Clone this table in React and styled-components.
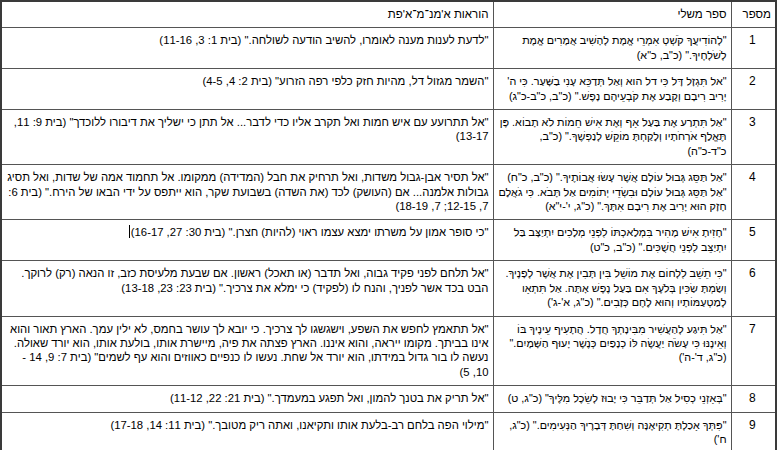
import React from 'react'
import styled, { createGlobalStyle } from 'styled-components'

const GlobalStyle = createGlobalStyle`
    html, body { margin:0; padding:0; background:#fff; }
    body { font-family:"Liberation Sans", Arial, sans-serif; color:#000; }
`

const TableBlock = styled.div`
    direction:rtl;
    width:777px;
    .bbsTbl { width:100%; border-collapse:collapse; border:2px solid #3a3a3a; table-layout:fixed;
        font-size:11.3px; line-height:14.4px; }
    .bbsTbl col:nth-child(1) { width:45px; }
    .bbsTbl col:nth-child(2) { width:238px; }
    .bbsTbl col:nth-child(3) { width:auto; }
    .bbsTbl th, .bbsTbl td { border:1px solid #555; padding:5px 4px 6px; text-align:right;
        vertical-align:top; font-weight:normal; }
    .bbsTbl th { font-size:11.5px; }
    .bbsTbl td.num { text-align:center; padding-right:6px; font-size:12px; }
    .bbsTbl td.verse { font-size:10.8px; }
`

const Caret = styled.span`
    display:inline-block; width:0; height:13px; border-left:1px solid #000;
    vertical-align:-2px; margin-right:1px;
`

const rows = [
    { no:1,
      verse:['"לְהוֹדִיעֲךָ קֹשְׁטְ אִמְרֵי אֱמֶת לְהָשִׁיב אֲמָרִים אֱמֶת לְשֹׁלְחֶיךָ." (כ"ב, כ"א)'],
      guide:'"לדעת לענות מענה לאומרו, להשיב הודעה לשולחה." (בית 1: 3, 11-16)' },
    { no:2,
      verse:['"אל תִּגְזָל דָּל כִּי דל הוא וְאַל תְּדַכֵּא עָנִי בַשָּׁעַר. כִּי ה\' יָרִיב רִיבָם וְקָבַע אֶת קֹבְעֵיהֶם נָפֶשׁ." (כ"ב, כ"ב-כ"ג)'],
      guide:'"השמר מגזול דל, מהיות חזק כלפי רפה הזרוע" (בית 2: 4, 4-5)' },
    { no:3,
      verse:['"אַל תִּתְרַע אֶת בַּעַל אָף וְאֶת אִישׁ חֵמוֹת לֹא תָבוֹא. פֶּן תֶּאֱלַף אֹרְחֹתָיו וְלָקַחְתָּ מוֹקֵשׁ לְנַפְשֶׁךָ." (כ"ב, כ"ד-כ"ה)'],
      guide:'"אל תתרועע עם איש חמות ואל תקרב אליו כדי לדבר... אל תתן כי ישליך את דיבורו ללוכדך" (בית 9: 11, 13-17)' },
    { no:4,
      verse:['"אַל תַּסֵּג גְּבוּל עוֹלָם אֲשֶׁר עָשׂוּ אֲבוֹתֶיךָ." (כ"ב, כ"ח)',
             '"אַל תַּסֵּג גְּבוּל עוֹלָם וּבִשְׂדֵי יְתוֹמִים אַל תָּבֹא. כִּי גֹאֲלָם חָזָק הוּא יָרִיב אֶת רִיבָם אִתָּךְ." (כ"ג, י\'-י"א)'],
      guide:'"אל תסיר אבן-גבול משדות, ואל תרחיק את חבל (המדידה) ממקומו. אל תחמוד אמה של שדות, ואל תסיג גבולות אלמנה... אם (העושק) לכד (את השדה) בשבועת שקר, הוא ייתפס על ידי הבאו של הירח." (בית 6: 7, 12-15; 7, 18-19)' },
    { no:5,
      verse:['"חָזִיתָ אִישׁ מָהִיר בִּמְלַאכְתּוֹ לִפְנֵי מְלָכִים יִתְיַצָּב בַּל יִתְיַצֵּב לִפְנֵי חֲשֻׁכִּים." (כ"ב, כ"ט)'],
      guide:'"כי סופר אמון על משרתו ימצא עצמו ראוי (להיות) חצרן." (בית 30: 27, 16-17)',
      caret:true },
    { no:6,
      verse:['"כִּי תֵשֵׁב לִלְחוֹם אֶת מוֹשֵׁל בִּין תָּבִין אֶת אֲשֶׁר לְפָנֶיךָ. וְשַׂמְתָּ שַׂכִּין בְּלֹעֶךָ אִם בַּעַל נֶפֶשׁ אָתָּה. אַל תִּתְאָו לְמַטְעַמּוֹתָיו וְהוּא לֶחֶם כְּזָבִים." (כ"ג, א\'-ג\')'],
      guide:'"אל תלחם לפני פקיד גבוה, ואל תדבר (או תאכל) ראשון. אם שבעת מלעיסת כזב, זו הנאה (רק) לרוקך. הבט בכד אשר לפניך, והנח לו (לפקיד) כי ימלא את צרכיך." (בית 23: 23, 13-18)' },
    { no:7,
      verse:['"אַל תִּיגַע לְהַעֲשִׁיר מִבִּינָתְךָ חֲדָל. הֲתָעִיף עֵינֶיךָ בּוֹ וְאֵינֶנּוּ כִּי עָשֹׂה יַעֲשֶׂה לּוֹ כְנָפַיִם כְּנֶשֶׁר יָעוּף הַשָּׁמָיִם." (כ"ג, ד\'-ה\')'],
      guide:'"אל תתאמץ לחפש את השפע, וישגשגו לך צרכיך. כי יובא לך עושר בחמס, לא ילין עמך. הארץ תאור והוא אינו בביתך. מקומו ייראה, והוא איננו. הארץ פצתה את פיה, מיישרת אותו, בולעת אותו, הוא יורד שאולה. נעשה לו בור גדול במידתו, הוא יורד אל שחת. נעשו לו כנפיים כאווזים והוא עף לשמים" (בית 7: 9, 14 - 10, 5)' },
    { no:8,
      verse:['"בְּאָזְנֵי כְסִיל אַל תְּדַבֵּר כִּי יָבוּז לְשֵׂכֶל מִלֶּיךָ" (כ"ג, ט)'],
      guide:'"אל תריק את בטנך להמון, ואל תפגע במעמדך." (בית 21: 22, 11-12)' },
    { no:9,
      verse:['"פִּתְּךָ אָכַלְתָּ תְקִיאֶנָּה וְשִׁחַתָּ דְּבָרֶיךָ הַנְּעִימִים." (כ"ג, ח\')'],
      guide:'"מילוי הפה בלחם רב-בלעת אותו ותקיאנו, ואתה ריק מטובך." (בית 11: 14, 17-18)' },
]

const App = () => {
    return (
        <TableBlock>
            <GlobalStyle />
            <table className="bbsTbl">
                <colgroup>
                    <col />
                    <col />
                    <col />
                </colgroup>
                <thead>
                    <tr>
                        <th scope="col">מספר</th>
                        <th scope="col">ספר משלי</th>
                        <th scope="col">הוראות א'מנ־מ־א'פת</th>
                    </tr>
                </thead>
                <tbody>
                    {rows.map((row) => (
                        <tr key={row.no}>
                            <td className="num">{row.no}</td>
                            <td className="verse">
                                {row.verse.map((line, i) => (
                                    <React.Fragment key={i}>{i > 0 && <br />}{line}</React.Fragment>
                                ))}
                            </td>
                            <td>{row.guide}{row.caret && <Caret />}</td>
                        </tr>
                    ))}
                </tbody>
            </table>
        </TableBlock>
    )
}

export default App
